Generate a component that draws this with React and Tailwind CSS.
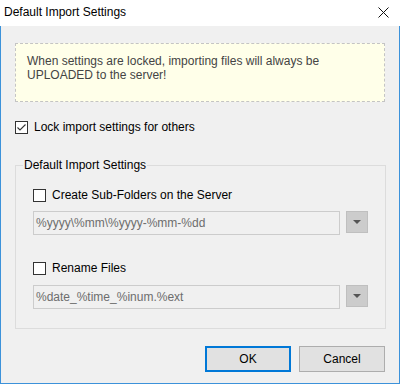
import React from 'react';

const font = { fontFamily: '"Segoe UI", "Liberation Sans", "Noto Sans", sans-serif' };

function CheckBox({ checked }) {
  return (
    <span className="w-[13px] h-[13px] border border-[#333333] bg-white flex items-center justify-center shrink-0">
      {checked && (
        <svg width="11" height="11" viewBox="0 0 11 11">
          <path d="M1.5 5.5 L4 8 L9.5 2.5" fill="none" stroke="#333333" strokeWidth="1.1" />
        </svg>
      )}
    </span>
  );
}

function ComboRow({ value, className }) {
  return (
    <div className={`flex items-start ${className}`}>
      <div className="w-[307px] h-[24px] border border-[#cccccc] bg-[#f0f0f0] pl-[2px] flex items-center text-[#6d6d6d]">
        {value}
      </div>
      <div className="ml-[6px] w-[22px] h-[22px] border border-[#bfbfbf] bg-[#cccccc] flex items-center justify-center">
        <svg width="8" height="4" viewBox="0 0 8 4">
          <path d="M0 0 H8 L4 4 Z" fill="#555555" />
        </svg>
      </div>
    </div>
  );
}

export default function App() {
  return (
    <div className="w-[400px] h-[384px] flex flex-col text-[12px] leading-[15px] text-black" style={font}>
      {/* ── Barre de titre ── */}
      <div className="h-[26px] bg-white flex items-center justify-between pl-[4px] pr-[11px] shrink-0">
        <span className="-mt-[2px]">Default Import Settings</span>
        <svg width="11" height="11" viewBox="0 0 11 11" className="-mt-[2px]">
          <path d="M0.5 0.5 L10.5 10.5 M10.5 0.5 L0.5 10.5" stroke="#111111" strokeWidth="1" />
        </svg>
      </div>

      {/* ── Corps ── */}
      <div className="flex-1 bg-[#f0f0f0] border-x border-b border-[#3c92da] px-[14px] pt-[17px] flex flex-col">
        <div className="h-[59px] border border-dashed border-[#c4c4c4] bg-[#ffffe9] pl-[11px] pt-[10px] leading-[14px] text-[#444444]">
          When settings are locked, importing files will always be
          <br />
          UPLOADED to the server!
        </div>

        <label className="mt-[19px] h-[13px] flex items-center gap-[6px]">
          <CheckBox checked />
          <span>Lock import settings for others</span>
        </label>

        <fieldset className="mt-[24px] border border-[#dcdcdc] px-[17px] pb-[19px]">
          <legend className="-ml-[10px] px-[1px] leading-[15px]">Default Import Settings</legend>

          <label className="mt-[16px] h-[13px] flex items-center gap-[6px]">
            <CheckBox />
            <span>Create Sub-Folders on the Server</span>
          </label>
          <ComboRow className="mt-[9px]" value={'%yyyy\\%mm\\%yyyy-%mm-%dd'} />

          <label className="mt-[27px] h-[13px] flex items-center gap-[6px]">
            <CheckBox />
            <span>Rename Files</span>
          </label>
          <ComboRow className="mt-[10px]" value="%date_%time_%inum.%ext" />
        </fieldset>

        <div className="mt-[17px] flex justify-end gap-[8px]">
          <button className="w-[86px] h-[26px] border-2 border-[#0078d7] bg-[#e1e1e1]">OK</button>
          <button className="w-[86px] h-[26px] border border-[#adadad] bg-[#e1e1e1]">Cancel</button>
        </div>
      </div>
    </div>
  );
}
